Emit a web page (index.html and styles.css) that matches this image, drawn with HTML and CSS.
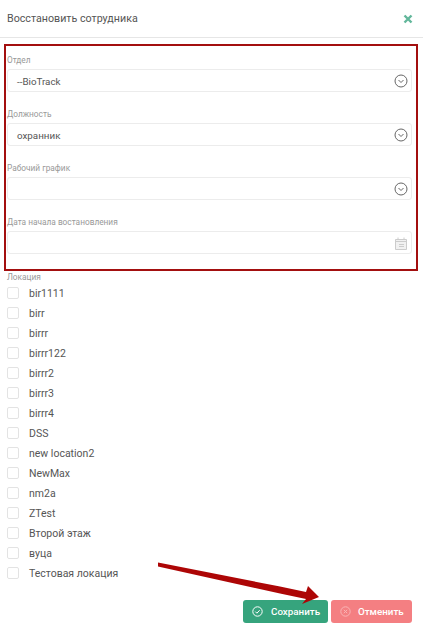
FILE: index.html
```html
<!DOCTYPE html>
<html lang="en">
<head>
    <meta charset="UTF-8">
    <meta name="viewport" content="width=device-width, initial-scale=1.0">
    <title>Восстановить сотрудника</title>
    <link rel="stylesheet" href="styles.css">
</head>
<body>
    <div class="modal">
        <header class="modal-header">
            <h1>Восстановить сотрудника</h1>
            <svg class="close-icon" width="10" height="10" viewBox="0 0 10 10"><path d="M1.500 1.500l7 7M8.500 1.500l-7 7"/></svg>
        </header>

        <form class="modal-body">
            <div class="field">
                <label>Отдел</label>
                <div class="control">
                    <span class="control-value">--BioTrack</span>
                    <svg class="chevron-icon" width="14" height="14" viewBox="0 0 14 14"><circle cx="7" cy="7" r="6"/><path d="M4.500 6l2.500 2.500L9.500 6"/></svg>
                </div>
            </div>
            <div class="field">
                <label>Должность</label>
                <div class="control">
                    <span class="control-value">охранник</span>
                    <svg class="chevron-icon" width="14" height="14" viewBox="0 0 14 14"><circle cx="7" cy="7" r="6"/><path d="M4.500 6l2.500 2.500L9.500 6"/></svg>
                </div>
            </div>
            <div class="field">
                <label>Рабочий график</label>
                <div class="control">
                    <span class="control-value"></span>
                    <svg class="chevron-icon" width="14" height="14" viewBox="0 0 14 14"><circle cx="7" cy="7" r="6"/><path d="M4.500 6l2.500 2.500L9.500 6"/></svg>
                </div>
            </div>
            <div class="field">
                <label>Дата начала востановления</label>
                <div class="control">
                    <span class="control-value"></span>
                    <svg class="calendar-icon" width="12" height="13" viewBox="0 0 12 13"><path d="M.5 2.500h11v10H.5zM3 .5v2M9 .5v2M.5 4.500h11M4 7.500h5M4 9.500h5"/></svg>
                </div>
            </div>

            <div class="locations">
                <label>Локация</label>
                <ul id="locationList" class="location-list"></ul>
            </div>
        </form>

        <footer class="modal-footer">
            <button type="button" class="btn btn-save">
                <svg width="11" height="11" viewBox="0 0 11 11"><circle cx="5.500" cy="5.500" r="4.700"/><path d="M3.300 5.600l1.600 1.600 2.800-3"/></svg>
                Сохранить
            </button>
            <button type="button" class="btn btn-cancel">
                <svg width="11" height="11" viewBox="0 0 11 11"><circle cx="5.500" cy="5.500" r="4.700"/><path d="M3.800 3.800l3.400 3.400M7.200 3.800l-3.400 3.400"/></svg>
                Отменить
            </button>
        </footer>
    </div>

    <!-- annotations drawn over the screenshot -->
    <div class="highlight-box"></div>
    <svg class="arrow" width="423" height="633" viewBox="0 0 423 633">
        <path d="M158 562.500L158 566.500L280 593.500L306 599L302 604L319 597L308 586L306 592L280 586.500Z"/>
    </svg>

    <script>
        const locations = ['bir1111', 'birr', 'birrr', 'birrr122', 'birrr2', 'birrr3', 'birrr4', 'DSS', 'new location2', 'NewMax', 'nm2a', 'ZTest', 'Второй этаж', 'вуца', 'Тестовая локация'];
        const list = document.getElementById('locationList');

        locations.forEach((name) => {
            const item = document.createElement('li');
            item.innerHTML = `<span class="checkbox"></span><span>${name}</span>`;
            list.appendChild(item);
        });
    </script>
</body>
</html>
```

FILE: styles.css
```css
html, body {
    height: 100%;
}
body {
    font-family: Roboto, Arial, sans-serif;
    margin: 0;
    background: #fff;
    color: #4a4a4a;
    overflow: hidden;
}
.modal {
    display: flex;
    flex-direction: column;
    height: 633px;
}
.modal-header {
    display: flex;
    justify-content: space-between;
    align-items: center;
    height: 37px;
    padding: 0 10px 0 7px;
    border-bottom: 1px solid #e6e6e6;
}
.modal-header h1 {
    margin: 0;
    font-size: 10.700px;
    font-weight: 400;
    color: #555;
}
.close-icon path {
    fill: none;
    stroke: #62b79b;
    stroke-width: 2.400;
}
.modal-body {
    padding: 16px 11px 0 7px;
}
.field {
    height: 54px;
}
label {
    display: block;
    height: 15px;
    line-height: 12px;
    font-size: 8.300px;
    color: #999;
}
.control {
    display: flex;
    justify-content: space-between;
    align-items: center;
    box-sizing: border-box;
    height: 23px;
    padding: 0 3px 0 9px;
    border: 1px solid #ececec;
    border-radius: 3px;
    font-size: 9.800px;
    color: #555;
}
.control-value {
    padding-top: 1px;
}
.chevron-icon circle, .chevron-icon path {
    fill: none;
    stroke: #666;
    stroke-width: 1;
}
.calendar-icon {
    margin: 1px 1px 0 0;
}
.calendar-icon path {
    fill: #f1f1f1;
    stroke: #ccc;
    stroke-width: 1;
}
.locations {
    margin-top: 1px;
}
.locations label {
    height: 12px;
}
.location-list {
    list-style: none;
    margin: 0;
    padding: 0;
}
.location-list li {
    display: flex;
    align-items: center;
    gap: 10px;
    height: 20px;
    font-size: 10.500px;
    color: #555;
}
.checkbox {
    box-sizing: border-box;
    width: 12px;
    height: 12px;
    border: 1px solid #e3e3e3;
    border-radius: 2px;
}
.modal-footer {
    display: flex;
    justify-content: flex-end;
    gap: 3px;
    margin-top: auto;
    padding: 0 11px 10px 0;
}
.btn {
    display: flex;
    align-items: center;
    gap: 8px;
    height: 23px;
    padding: 0 0 0 9px;
    border: none;
    border-radius: 3px;
    color: #fff;
    font-family: inherit;
    font-size: 9.800px;
    font-weight: 500;
}
.btn svg circle, .btn svg path {
    fill: none;
    stroke-width: 1;
}
.btn-save {
    width: 85px;
    background: #36a47d;
}
.btn-save svg circle, .btn-save svg path {
    stroke: #fff;
}
.btn-cancel {
    width: 81px;
    gap: 7px;
    background: #f47f82;
}
.btn-cancel svg circle, .btn-cancel svg path {
    stroke: #f9b5b6;
}
.highlight-box {
    position: absolute;
    left: 4px;
    top: 44px;
    width: 410px;
    height: 223px;
    border: 2px solid #a30f0f;
}
.arrow {
    position: absolute;
    left: 0;
    top: 0;
    pointer-events: none;
}
.arrow path {
    fill: #ad0606;
}
```
